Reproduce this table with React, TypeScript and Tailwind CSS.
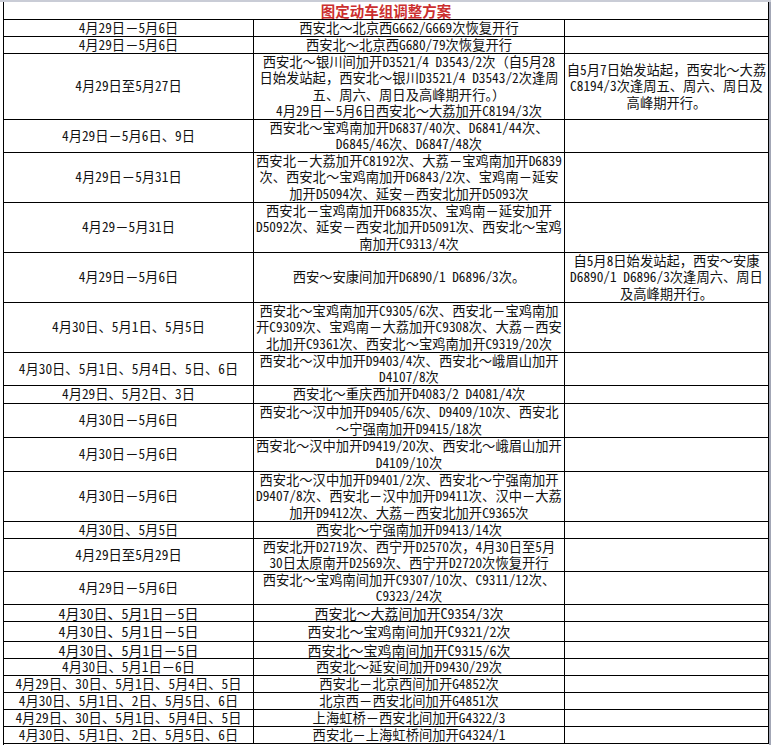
import React from "react";

type Row = { h: string; a: string; b: string[]; c?: string[]; big?: boolean };

const rows: Row[] = [
  { h: "h-[17px]", a: "4月29日－5月6日", b: ["西安北～北京西G662/G669次恢复开行"] },
  { h: "h-[17px]", a: "4月29日－5月6日", b: ["西安北～北京西G680/79次恢复开行"] },
  {
    h: "h-[66px]",
    a: "4月29日至5月27日",
    b: [
      "西安北～银川间加开D3521/4 D3543/2次（自5月28",
      "日始发站起，西安北～银川D3521/4 D3543/2次逢周",
      "五、周六、周日及高峰期开行。）",
      "4月29日－5月6日西安北～大荔加开C8194/3次",
    ],
    c: ["自5月7日始发站起，西安北～大荔", "C8194/3次逢周五、周六、周日及", "高峰期开行。"],
  },
  { h: "h-[33px]", a: "4月29日－5月6日、9日", b: ["西安北～宝鸡南加开D6837/40次、D6841/44次、", "D6845/46次、D6847/48次"] },
  {
    h: "h-[50px]",
    a: "4月29日－5月31日",
    b: ["西安北－大荔加开C8192次、大荔－宝鸡南加开D6839", "次、西安北～宝鸡南加开D6843/2次、宝鸡南－延安", "加开D5094次、延安－西安北加开D5093次"],
  },
  {
    h: "h-[50px]",
    a: "4月29－5月31日",
    b: ["西安北－宝鸡南加开D6835次、宝鸡南－延安加开", "D5092次、延安－西安北加开D5091次、西安北～宝鸡", "南加开C9313/4次"],
  },
  {
    h: "h-[50px]",
    a: "4月29日－5月6日",
    b: ["西安～安康间加开D6890/1 D6896/3次。"],
    c: ["自5月8日始发站起，西安～安康", "D6890/1 D6896/3次逢周六、周日", "及高峰期开行。"],
  },
  {
    h: "h-[50px]",
    a: "4月30日、5月1日、5月5日",
    b: ["西安北～宝鸡南加开C9305/6次、西安北－宝鸡南加", "开C9309次、宝鸡南－大荔加开C9308次、大荔－西安", "北加开C9361次、西安北～宝鸡南加开C9319/20次"],
  },
  { h: "h-[33px]", a: "4月30日、5月1日、5月4日、5日、6日", b: ["西安北～汉中加开D9403/4次、西安北～峨眉山加开", "D4107/8次"] },
  { h: "h-[18px]", a: "4月29日、5月2日、3日", b: ["西安北～重庆西加开D4083/2 D4081/4次"] },
  { h: "h-[34px]", a: "4月30日－5月6日", b: ["西安北～汉中加开D9405/6次、D9409/10次、西安北", "～宁强南加开D9415/18次"] },
  { h: "h-[34px]", a: "4月30日－5月6日", b: ["西安北～汉中加开D9419/20次、西安北～峨眉山加开", "D4109/10次"] },
  {
    h: "h-[50px]",
    a: "4月30日－5月6日",
    b: ["西安北～汉中加开D9401/2次、西安北～宁强南加开", "D9407/8次、西安北－汉中加开D9411次、汉中－大荔", "加开D9412次、大荔－西安北加开C9365次"],
  },
  { h: "h-[17px]", a: "4月30日、5月5日", b: ["西安北～宁强南加开D9413/14次"] },
  { h: "h-[33px]", a: "4月29日至5月29日", b: ["西安北开D2719次、西宁开D2570次，4月30日至5月", "30日太原南开D2569次、西宁开D2720次恢复开行"] },
  { h: "h-[33px]", a: "4月29日－5月6日", b: ["西安北～宝鸡南间加开C9307/10次、C9311/12次、", "C9323/24次"] },
  { h: "h-[17px]", a: "4月30日、5月1日－5日", b: ["西安北～大荔间加开C9354/3次"], big: true },
  { h: "h-[20px]", a: "4月30日、5月1日－5日", b: ["西安北～宝鸡南间加开C9321/2次"], big: true },
  { h: "h-[17px]", a: "4月30日、5月1日－5日", b: ["西安北～宝鸡南间加开C9315/6次"], big: true },
  { h: "h-[17px]", a: "4月30日、5月1日－6日", b: ["西安北～延安间加开D9430/29次"] },
  { h: "h-[17px]", a: "4月29日、30日、5月1日、5月4日、5日", b: ["西安北－北京西间加开G4852次"] },
  { h: "h-[17px]", a: "4月30日、5月1日、2日、5月5日、6日", b: ["北京西－西安北间加开G4851次"] },
  { h: "h-[17px]", a: "4月29日、30日、5月1日、5月4日、5日", b: ["上海虹桥－西安北间加开G4322/3"] },
  { h: "h-[17px]", a: "4月30日、5月1日、2日、5月5日、6日", b: ["西安北－上海虹桥间加开G4324/1"] },
];

function Lines({ lines }: { lines: string[] }) {
  return (
    <>
      {lines.map((l, i) => (
        <div key={i} className="whitespace-nowrap">
          {l}
        </div>
      ))}
    </>
  );
}

export default function App() {
  return (
    <div className="w-[771px] h-[745px] bg-white overflow-hidden text-[#111] font-['Noto_Sans_Mono_CJK_SC','Noto_Sans_CJK_SC',sans-serif] text-[13.3px] leading-[16.5px]">
      <div className="h-[2px] bg-[#c9ccd6]" />
      <div className="flex h-[743px]">
        <div className="w-[3px] shrink-0" />
        <div className="w-[766px] shrink-0 border-l border-black">
          <div className="h-[18px] border-b border-black flex items-center justify-center border-r">
            <span className="text-[#cc2f2f] font-bold text-[14.5px] leading-[16px]">图定动车组调整方案</span>
          </div>
          {rows.map((r, i) => (
            <div key={i} className={`flex border-b border-black ${r.h} ${r.big ? "text-[14px]" : ""}`}>
              <div className="w-[250px] shrink-0 border-r border-black flex flex-col items-center justify-center">
                <div className="whitespace-nowrap">{r.a}</div>
              </div>
              <div className="w-[311px] shrink-0 border-r border-black flex flex-col items-center justify-center">
                <Lines lines={r.b} />
              </div>
              <div className="w-[204px] shrink-0 border-r border-black flex flex-col items-center justify-center">
                {r.c ? <Lines lines={r.c} /> : null}
              </div>
            </div>
          ))}
        </div>
        <div className="w-[2px] shrink-0 bg-[#a3a7b6]" />
      </div>
    </div>
  );
}
